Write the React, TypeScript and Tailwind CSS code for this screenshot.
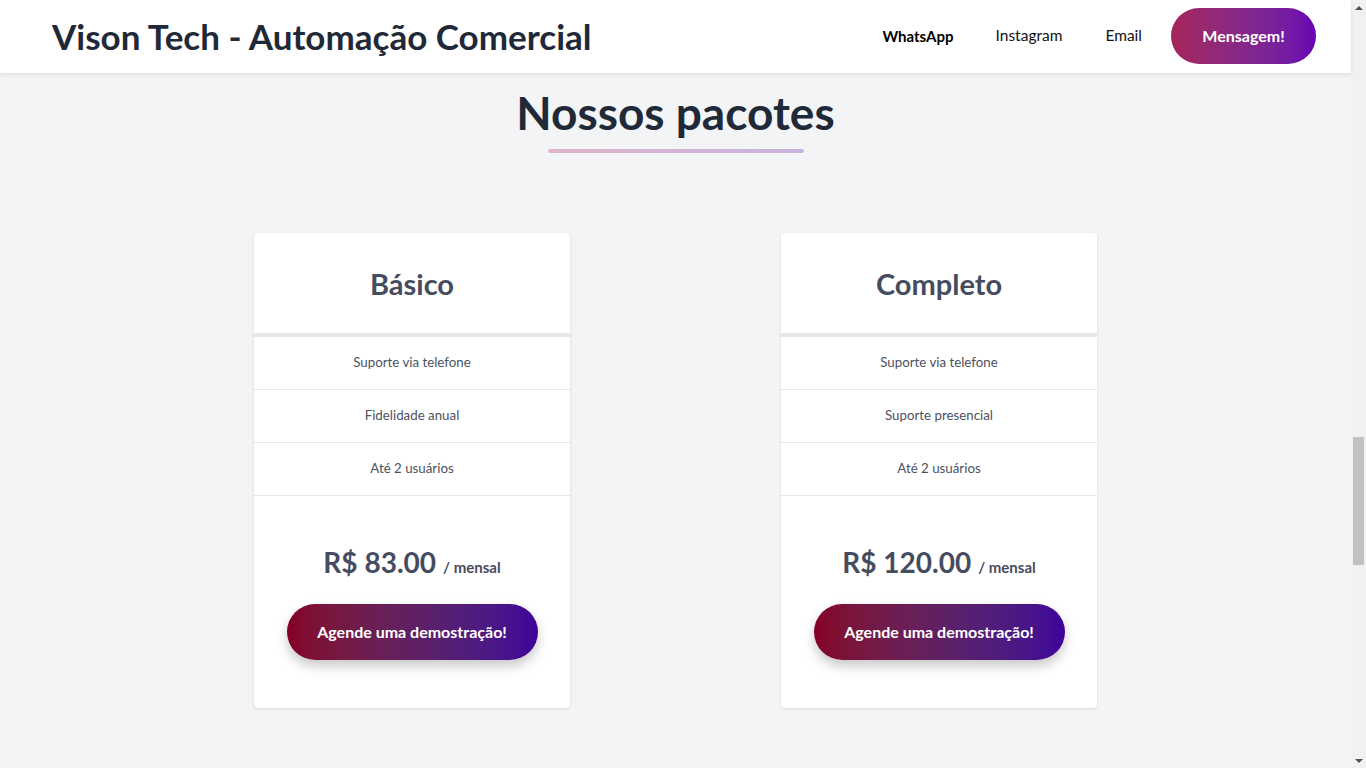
import React from "react";

const font = { fontFamily: "Lato, 'Noto Sans', sans-serif" };

function Card({ title, features, price }: { title: string; features: string[]; price: string }) {
  return (
    <div className="w-[316px] bg-white rounded-[4px] shadow-[0_1px_3px_rgba(0,0,0,0.12)] flex flex-col">
      <div className="h-[104px] flex items-center justify-center border-b-4 border-[#e5e7eb]">
        <h2 className="text-[29px] font-bold text-[#464c60] leading-none">{title}</h2>
      </div>
      {features.map((f) => (
        <div key={f} className="h-[53px] flex items-center justify-center border-b border-[#e5e7eb] text-[13.3px] text-[#4b5263]">
          {f}
        </div>
      ))}
      <div className="flex flex-col items-center pt-[50px] pb-[48px]">
        <div className="flex items-baseline text-[#464c60] font-bold">
          <span className="text-[28px] leading-[32px]">{price}</span>
          <span className="text-[15px] ml-[7px]">/ mensal</span>
        </div>
        <button className="mt-[25px] w-[251px] h-[56px] rounded-full bg-gradient-to-r from-[#850026] to-[#3f0099] text-white font-bold text-[16px] shadow-[0_6px_12px_rgba(0,0,0,0.22)]">
          Agende uma demostração!
        </button>
      </div>
    </div>
  );
}

export default function App() {
  return (
    <div className="h-screen w-full flex overflow-hidden" style={font}>
      <div className="flex-1 bg-[#f3f4f6] flex flex-col">
        <header className="h-[73px] bg-white shadow-[0_2px_4px_rgba(0,0,0,0.08)] flex items-center justify-between pl-[52px] pr-[35px] pb-[1px] relative z-10">
          <h1 className="text-[35px] font-bold text-[#1f2937] leading-none">Vison Tech - Automação Comercial</h1>
          <nav className="flex items-center text-[15.5px] text-[#111]">
            <a className="font-bold text-black text-[15px]">WhatsApp</a>
            <a className="ml-[42px]">Instagram</a>
            <a className="ml-[43px]">Email</a>
            <button className="ml-[29px] w-[145px] h-[56px] rounded-full bg-gradient-to-r from-[#a5255a] to-[#6a00b4] text-white font-bold text-[16px]">
              Mensagem!
            </button>
          </nav>
        </header>
        <section className="flex flex-col items-center pt-[12px]">
          <h2 className="text-[46px] font-bold text-[#1f2937] leading-[56px]">Nossos pacotes</h2>
          <div className="mt-[8px] w-[256px] h-[4px] rounded-full bg-gradient-to-r from-[#dfb5c9] to-[#c9b3e2]" />
          <div className="mt-[80px] flex justify-center gap-[211px]">
            <Card title="Básico" features={["Suporte via telefone", "Fidelidade anual", "Até 2 usuários"]} price="R$ 83.00" />
            <Card title="Completo" features={["Suporte via telefone", "Suporte presencial", "Até 2 usuários"]} price="R$ 120.00" />
          </div>
        </section>
      </div>
      <div className="w-[15px] h-full bg-[#f1f1f1] flex flex-col items-center">
        <div className="h-[15px] flex items-center justify-center">
          <div className="w-0 h-0 border-l-[4px] border-r-[4px] border-b-[4px] border-l-transparent border-r-transparent border-b-[#505050]" />
        </div>
        <div className="flex-1 w-full flex flex-col items-center pt-[422px]">
          <div className="w-[11px] h-[128px] bg-[#c1c1c1]" />
        </div>
        <div className="h-[15px] flex items-center justify-center">
          <div className="w-0 h-0 border-l-[4px] border-r-[4px] border-t-[4px] border-l-transparent border-r-transparent border-t-[#505050]" />
        </div>
      </div>
    </div>
  );
}
